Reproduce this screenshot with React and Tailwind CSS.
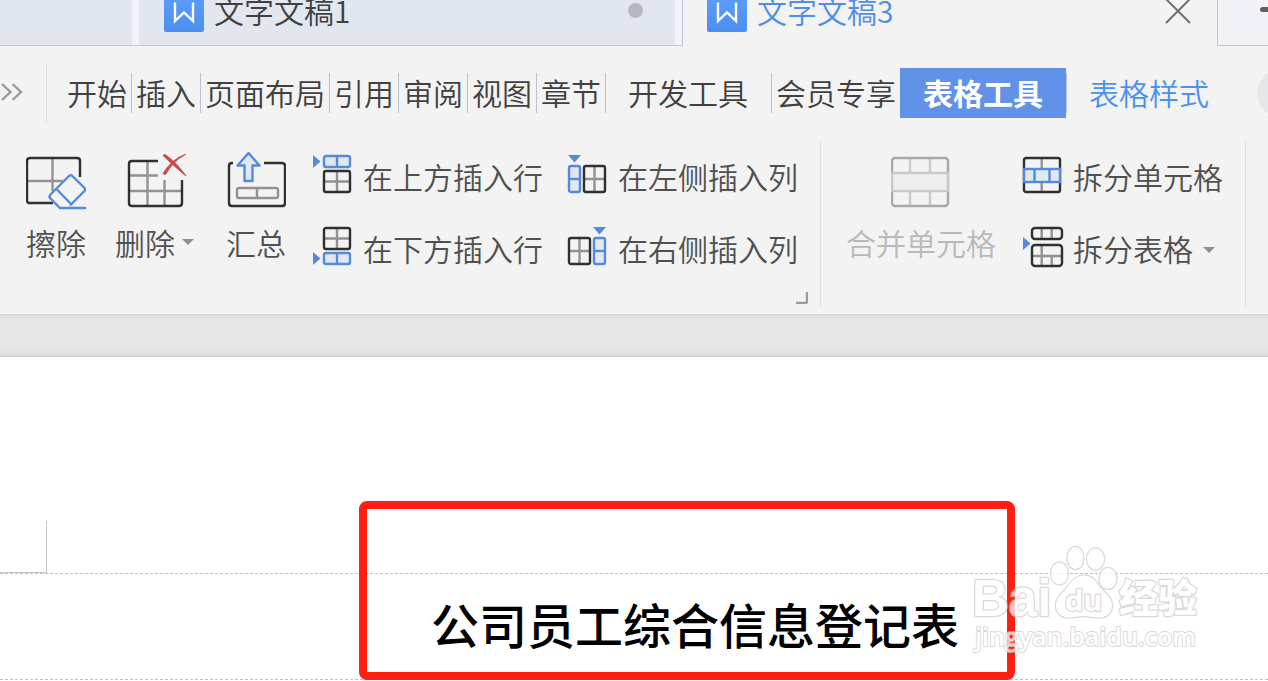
import React, { useState } from "react";

const menus = [
  { name: "开始", pad: "px-1 border-r" },
  { name: "插入", pad: "px-1 border-r" },
  { name: "页面布局", pad: "px-1 border-r" },
  { name: "引用", pad: "px-1 border-r" },
  { name: "审阅", pad: "px-1 border-r" },
  { name: "视图", pad: "px-1 border-r" },
  { name: "章节", pad: "px-1 border-r" },
  { name: "开发工具", pad: "pl-[22px] pr-[23px] border-r" },
  { name: "会员专享", pad: "px-1" },
];

const DARK = "#303030";
const GRAY = "#929292";
const BLUE = "#548adb";
const PALE = "#e2e8f1";

const WriterIcon = () => (
  <svg className="h-10 w-10 shrink-0" viewBox="0 0 40 40" fill="none">
    <defs>
      <linearGradient id="writer" x1="0" y1="0" x2="0" y2="1">
        <stop offset="0" stopColor="#5f9dfa" />
        <stop offset="1" stopColor="#4a8ff2" />
      </linearGradient>
    </defs>
    <rect width="40" height="40" rx="2" fill="url(#writer)" />
    <path d="M11 10.500V29L20 20.500L29 29V10.500" stroke="#fff" strokeWidth="2.400" />
  </svg>
);

const Caret = () => (
  <svg className="h-[6px] w-3 shrink-0" viewBox="0 0 12 6">
    <path d="M0 0h12l-6 6z" fill="#8f8f8f" />
  </svg>
);

const EraseIcon = () => (
  <svg className="h-[60px] w-[60px]" viewBox="0 0 60 60" fill="none" strokeWidth="2.400">
    <path d="M26.500 8V41M1 31H37" stroke={GRAY} />
    <path d="M27 53H4q-3 0-3-3V11q0-3 3-3H51q3 0 3 3V27" stroke={DARK} />
    <path
      d="M60 58H34L24.500 48.500q-2-2 0-4L43 26q1.700-1.700 3.400 0L58.500 38q1.500 1.500 0 3L44 55.500M30.500 39L45 54"
      stroke={BLUE}
    />
  </svg>
);

const DeleteIcon = () => (
  <svg className="h-[60px] w-[79px]" viewBox="0 0 79 60" fill="none" strokeWidth="2.400">
    <path d="M15 25.500H43M15 41H67M32.500 11V56M49.500 30V56" stroke={GRAY} />
    <path d="M43 11H17q-3 0-3 3V53q0 3 3 3H64q3 0 3-3V30" stroke={DARK} />
    <path
      d="M48 5.500L50 4.500Q62 13 71 26Q60 17 48 5.500ZM70.500 4.300Q58 11 50.500 24.500L48 23.500Q57 9 70.500 4.300Z"
      fill="#c94848"
      stroke="#c94848"
      strokeWidth="1"
    />
  </svg>
);

const SummaryIcon = () => (
  <svg className="h-[60px] w-[60px]" viewBox="0 0 60 60" fill="none" strokeWidth="2.400">
    <path d="M7 13H6q-3 0-3 3V53q0 3 3 3H56q3 0 3-3V16q0-3-3-3H38" stroke={DARK} />
    <rect x="11" y="38" width="41" height="10" rx="2" stroke={GRAY} />
    <path d="M31 38V48" stroke={GRAY} />
    <path
      d="M22.500 3L33.500 15.500H26.500V31H18.500V15.500H11.500Z"
      fill={PALE}
      stroke={BLUE}
      strokeLinejoin="round"
    />
  </svg>
);

const MergeIcon = () => (
  <svg className="h-[60px] w-[60px]" viewBox="0 0 60 60" fill="none" strokeWidth="2.400">
    <path d="M19 8V23M39 8V23M19 42V56M39 42V56" stroke="#cacaca" />
    <rect x="1" y="8" width="56" height="48" rx="3" stroke="#a8a8a8" />
    <rect x="1" y="23" width="56" height="18" fill="#eee" stroke="#c8c8c8" />
  </svg>
);

const SmallIcon = ({ children }) => (
  <svg className="h-12 w-10 shrink-0 overflow-visible" viewBox="0 0 40 48" fill="none" strokeWidth="2.400">
    {children}
  </svg>
);

const RowAboveIcon = () => (
  <SmallIcon>
    <path d="M0 1V14L7.500 7.500Z" fill={BLUE} />
    <rect x="11" y="2" width="26" height="11" rx="2" fill={PALE} stroke={BLUE} />
    <path d="M24 3V12" stroke={BLUE} />
    <path d="M24 17V38M11 27.500H37" stroke={GRAY} />
    <rect x="11" y="17" width="26" height="21" rx="2" stroke={DARK} />
  </SmallIcon>
);

const RowBelowIcon = () => (
  <SmallIcon>
    <path d="M24 2V23M11 12.500H37" stroke={GRAY} />
    <rect x="11" y="2" width="26" height="21" rx="2" stroke={DARK} />
    <path d="M0 26V39L7.500 32.500Z" fill={BLUE} />
    <rect x="11" y="27" width="26" height="11" rx="2" fill={PALE} stroke={BLUE} />
    <path d="M24 28V37" stroke={BLUE} />
  </SmallIcon>
);

const ColLeftIcon = () => (
  <SmallIcon>
    <path d="M0 1H13L6.500 8.500Z" fill={BLUE} />
    <rect x="1" y="12" width="11" height="26" rx="2" fill={PALE} stroke={BLUE} />
    <path d="M2 25H11" stroke={BLUE} />
    <path d="M26.500 12V38M16 25H37" stroke={GRAY} />
    <rect x="16" y="12" width="21" height="26" rx="2" stroke={DARK} />
  </SmallIcon>
);

const ColRightIcon = () => (
  <SmallIcon>
    <path d="M25 1H38L31.500 8.500Z" fill={BLUE} />
    <path d="M11.500 12V38M1 25H22" stroke={GRAY} />
    <rect x="1" y="12" width="21" height="26" rx="2" stroke={DARK} />
    <rect x="26" y="12" width="11" height="26" rx="2" fill={PALE} stroke={BLUE} />
    <path d="M27 25H36" stroke={BLUE} />
  </SmallIcon>
);

const SplitCellsIcon = () => (
  <SmallIcon>
    <path d="M18.700 4V14M18.700 28V37" stroke={GRAY} />
    <rect x="1" y="4" width="36" height="34" rx="2" stroke={DARK} />
    <rect x="1" y="15" width="36" height="13" fill={PALE} stroke={BLUE} />
    <path d="M11.500 15V28M26.500 15V28" stroke={BLUE} />
  </SmallIcon>
);

const SplitTableIcon = () => (
  <SmallIcon>
    <path d="M0 11V24L7.500 17.500Z" fill={BLUE} />
    <path d="M18.700 2V13M28.700 2V13M9 30H38M18.700 19V40M28.700 30V40" stroke={GRAY} />
    <rect x="9" y="2" width="30" height="11" rx="3" stroke={DARK} />
    <rect x="9" y="19" width="30" height="21" rx="3" stroke={DARK} />
  </SmallIcon>
);

const BigButton = ({ icon, label, caret, disabled, className }) => (
  <button
    disabled={disabled}
    className={`flex flex-col items-center gap-3 self-start pt-[27px] disabled:text-[#b9b9b9] ${className}`}>
    {icon}
    <span className="flex items-center gap-[7px] leading-10">
      {label}
      {caret && <Caret />}
    </span>
  </button>
);

const RowButton = ({ icon, label, caret }) => (
  <button className="flex h-[72px] items-center gap-[10px]">
    {icon}
    <span className="pb-1">{label}</span>
    {caret && <Caret />}
  </button>
);

// Paw logo with the site name, laid over the document
const Watermark = () => (
  <svg
    className="absolute -top-[33px] right-[66px] h-[116px] w-[232px] opacity-75"
    viewBox="0 0 232 116"
    fill="#fff"
    stroke="#cdcdcd"
    strokeWidth="2.500"
    strokeLinejoin="round"
    paintOrder="stroke">
    <text x="2" y="75" fontSize="51" fontWeight="700" fontFamily="Liberation Sans, Arial, sans-serif">
      Bai
    </text>
    <ellipse cx="89.500" cy="32.500" rx="8.500" ry="11" />
    <ellipse cx="105.500" cy="17" rx="8" ry="11" />
    <ellipse cx="125.500" cy="18" rx="8.500" ry="10.500" />
    <ellipse cx="138" cy="37.500" rx="8.500" ry="10.500" />
    <path d="M114 34.500c8 0 12 6 16 12c5 6 12 10 12 18c0 8-6 12-13 12c-6 0-9-1.500-15-1.500s-9 1.500-15 1.500c-8 0-13-5-13-12c0-8 6-12 11-18c4-6 9-12 17-12z" />
    <text x="95" y="70" fontSize="29" fontWeight="700" fontFamily="Open Sans, sans-serif">
      du
    </text>
    <text x="149" y="71" fontSize="39" fontWeight="900" fontFamily="Noto Sans CJK SC, sans-serif">
      经验
    </text>
    <text x="5" y="105" fontSize="25" fontWeight="600" strokeWidth="2" fontFamily="Open Sans, sans-serif">
      jingyan.baidu.com
    </text>
  </svg>
);

const App = () => {
  const [active, setActive] = useState("表格工具");

  return (
    <div className="flex min-h-screen flex-col overflow-hidden bg-[#f3f3f3] font-['Noto_Sans_CJK_SC',sans-serif] text-[30px] font-[350] leading-10 whitespace-nowrap text-[#404040]">
      {/* Document tabs */}
      <header className="flex h-[46px] shrink-0 overflow-hidden">
        <div className="flex min-w-0 basis-[683px] items-end border-r border-b border-[#c2c6d6] bg-[#f1f3f9] pr-[7px]">
          <div className="mr-[7px] h-full w-[132px] shrink-0 bg-[#e2e6ef]"></div>
          <button className="flex h-[60px] flex-1 items-end gap-[10px] bg-[#e2e6ef] pr-8 pb-[13px] pl-[25px]">
            <WriterIcon />
            <span className="pb-[2px]">文字文稿1</span>
            <span className="mb-[14px] ml-auto h-[15px] w-[15px] rounded-full bg-[#b5b8c0]"></span>
          </button>
        </div>
        <div className="flex flex-1 items-end gap-[10px] pr-[26px] pb-[14px] pl-6 text-[#4f8de8]">
          <WriterIcon />
          <span className="pb-[2px]">文字文稿3</span>
          <button aria-label="关闭" className="ml-auto">
            <svg className="h-[34px] w-[26px]" viewBox="0 0 26 34" fill="none">
              <path d="M1 1L25 25M25 1L1 25" stroke="#707070" strokeWidth="2" />
            </svg>
          </button>
        </div>
        <button
          aria-label="新建"
          className="flex w-[51px] justify-end border-b border-l border-[#c2c6d6] bg-[#f1f3f9] pt-[7px]">
          <span className="h-[5px] w-2 rounded-l-full bg-[#606060]"></span>
        </button>
      </header>

      {/* Menu bar */}
      <nav className="flex h-[77px] shrink-0 items-center pt-[17px]">
        <button aria-label="更多" className="flex h-[60px] w-[47px] items-center border-r border-[#dedede] pb-[2px] pl-[1px]">
          <svg className="h-[22px] w-[22px]" viewBox="0 0 22 22" fill="none">
            <path d="M1 3L9.500 11L1 19M11.500 3L20 11L11.500 19" stroke="#9a9a9a" strokeWidth="2.400" />
          </svg>
        </button>
        <div className="ml-4 flex h-[60px] items-center">
          {menus.map((menu) => (
            <button
              key={menu.name}
              onClick={() => setActive(menu.name)}
              className={`flex h-10 items-end border-[#bcc2d2] pb-[1px] ${menu.pad}`}>
              {menu.name}
            </button>
          ))}
          <button
            aria-pressed={active === "表格工具"}
            onClick={() => setActive("表格工具")}
            className="h-[50px] bg-[#6192e7] px-[23px] pb-[2px] font-bold text-white">
            表格工具
          </button>
          <button
            onClick={() => setActive("表格样式")}
            className="flex h-10 items-end border-l border-[#bcc2d2] px-[22px] pb-[1px] text-[#4a91f2]">
            表格样式
          </button>
        </div>
        <div className="ml-auto h-[50px] w-[11px] overflow-hidden">
          <div className="h-[50px] w-[50px] rounded-full bg-[#e6e7e9]"></div>
        </div>
      </nav>

      {/* Ribbon */}
      <section className="flex h-[191px] shrink-0 text-[#505050]">
        <BigButton icon={<EraseIcon />} label="擦除" className="ml-[26px]" />
        <BigButton icon={<DeleteIcon />} label="删除" caret className="ml-[29px]" />
        <BigButton icon={<SummaryIcon />} label="汇总" className="ml-8" />
        <div className="ml-[27px] grid grid-cols-2 grid-rows-2 gap-x-[25px] self-start pt-[19px]">
          <RowButton icon={<RowAboveIcon />} label="在上方插入行" />
          <RowButton icon={<ColLeftIcon />} label="在左侧插入列" />
          <RowButton icon={<RowBelowIcon />} label="在下方插入行" />
          <RowButton icon={<ColRightIcon />} label="在右侧插入列" />
        </div>
        <div className="relative mt-[17px] mb-[6px] w-[23px] border-r border-[#e0e0e0]">
          <button aria-label="表格属性" className="absolute right-3 bottom-1 h-[13px] w-[13px]">
            <svg viewBox="0 0 13 13" fill="none">
              <path d="M1 12H10q2 0 2-2V1" stroke="#9a9a9a" strokeWidth="2.400" />
            </svg>
          </button>
        </div>
        <BigButton icon={<MergeIcon />} label="合并单元格" disabled className="ml-[25px]" />
        <div className="ml-[27px] flex flex-col pt-[19px]">
          <RowButton icon={<SplitCellsIcon />} label="拆分单元格" />
          <RowButton icon={<SplitTableIcon />} label="拆分表格" caret />
        </div>
        <div className="mt-[17px] mb-[6px] w-[23px] border-r border-[#e0e0e0]"></div>
      </section>

      {/* Gap above the sheet */}
      <div className="h-[43px] shrink-0 border-t border-b border-t-[#d6d6d6] border-b-[#d2d2d2] bg-[linear-gradient(#dedede,#e7e7e7_15%,#e7e7e7_80%,#dcdcdc)]"></div>

      {/* Document */}
      <main className="flex-1 bg-white pt-[164px]">
        <div className="h-[52px] w-[47px] border-r border-b border-[#c4c4c4]"></div>
        <div className="relative h-[107px] border-t border-b border-dashed border-[#c0c0c0] pt-[13px] pl-[431px]">
          <h1 className="text-5xl leading-[72px] font-medium text-black">公司员工综合信息登记表</h1>
          <div className="absolute -top-[73px] left-[359px] h-[179px] w-[656px] rounded-lg border-8 border-[#ff1e10]"></div>
          <Watermark />
        </div>
      </main>
    </div>
  );
};

export default App;
